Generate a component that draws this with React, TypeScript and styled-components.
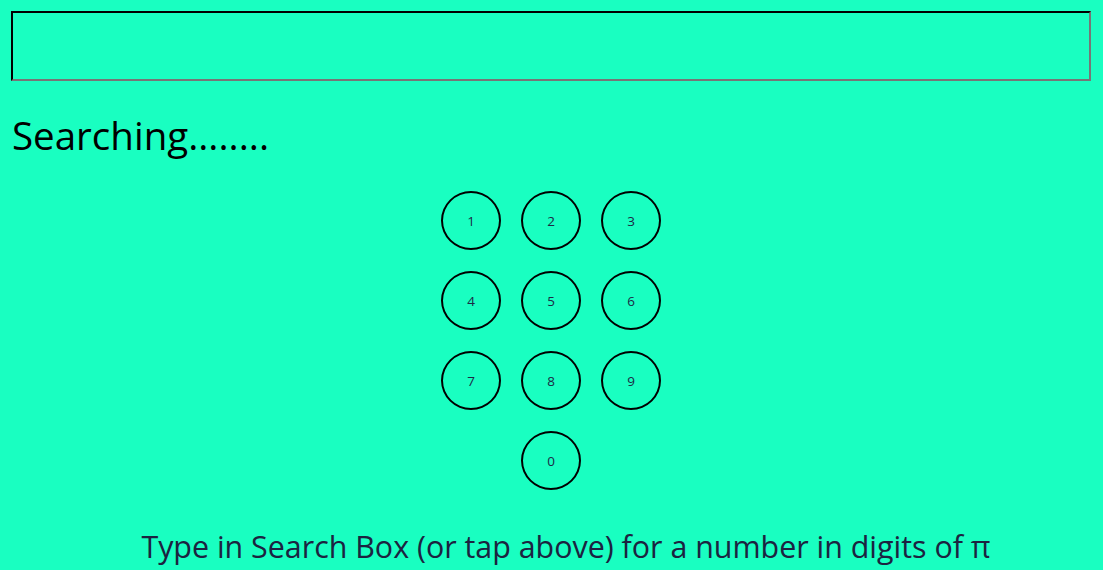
import styled, { createGlobalStyle } from "styled-components";

const GlobalStyle = createGlobalStyle`
  html, body {
    margin: 0;
    padding: 0;
    background: #19ffc1;
  }
  body {
    font-family: "Open Sans", "Noto Sans", sans-serif;
    overflow: hidden;
  }
`;

const Page = styled.div`
  padding: 11px 12px 0 11px;
  display: flex;
  flex-direction: column;
`;

const SearchBox = styled.input`
  box-sizing: border-box;
  width: 100%;
  height: 70px;
  margin: 0;
  padding: 0 8px;
  background: transparent;
  border: 2px inset #767676;
  border-top-color: #1a1a1a;
  border-left-color: #1a1a1a;
  font-size: 28px;
  font-family: inherit;
  outline: none;
`;

const Status = styled.h1`
  margin: 27px 0 0 1px;
  font-size: 38.5px;
  font-weight: 400;
  line-height: 54px;
  color: #000;
`;

const Keypad = styled.div`
  display: grid;
  grid-template-columns: repeat(3, 60px);
  grid-auto-rows: 59px;
  column-gap: 20px;
  row-gap: 21px;
  justify-content: center;
  margin-top: 29px;
`;

const Key = styled.button<{ $col?: number }>`
  box-sizing: border-box;
  grid-column: ${(p) => p.$col ?? "auto"};
  width: 60px;
  height: 59px;
  padding: 0;
  border: 2px solid #000;
  border-radius: 50%;
  background: transparent;
  color: #1c2b45;
  font-family: inherit;
  font-size: 13.5px;
  cursor: pointer;
`;

const Hint = styled.p`
  margin: 37px 0 0;
  text-align: center;
  font-size: 30.4px;
  line-height: 40px;
  color: #1c2340;
  padding-left: 30px;
  white-space: nowrap;
`;

const digits = ["1", "2", "3", "4", "5", "6", "7", "8", "9"];

const App = () => {
  return (
    <>
      <GlobalStyle />
      <Page>
        <SearchBox type="text" />
        <Status>Searching........</Status>
        <Keypad>
          {digits.map((d) => (
            <Key key={d}>{d}</Key>
          ))}
          <Key $col={2}>0</Key>
        </Keypad>
        <Hint>Type in Search Box (or tap above) for a number in digits of π</Hint>
      </Page>
    </>
  );
};

export default App;
